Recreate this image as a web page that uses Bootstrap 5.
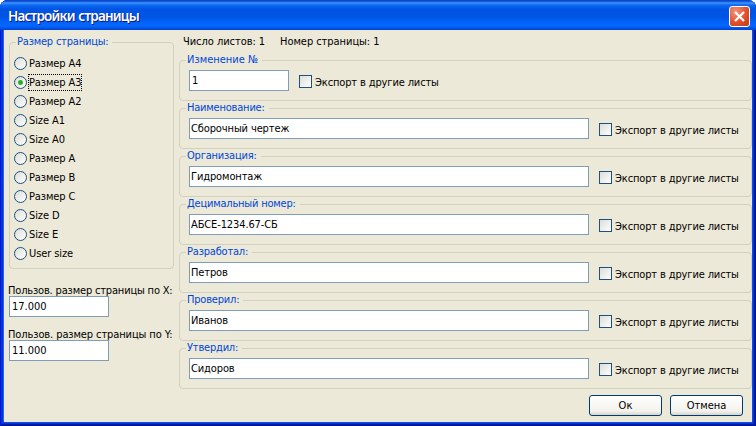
<!DOCTYPE html>
<html lang="ru">
<head>
<meta charset="utf-8">
<title>Настройки страницы</title>
<link href="https://cdn.jsdelivr.net/npm/bootstrap@5.3.0/dist/css/bootstrap.min.css" rel="stylesheet">
<style>
body{width:756px;height:426px;overflow:hidden;background:#fff;color:#000;font:11px/14px "DejaVu Sans Condensed","DejaVu Sans",sans-serif}
.window{width:756px;height:426px;background:#0831d9;border-radius:8px 8px 0 0;overflow:hidden;box-shadow:inset 1px 0 #0019cf,inset -1px -1px #00138c,inset 2px 0 #0831d9,inset -2px -2px #001dac}
.titlebar{height:30px;padding:2px 6px 0 8px;background:linear-gradient(#0845c9 0,#0a47cf 1px,#3d95ff 3px,#0c6bf2 5px,#0054e3 9px,#0055e5 17px,#0262f7 22px,#0567ff 26px,#0355e8 28px,#0043cf 30px)}
.titlebar h1{margin:0;font:600 13.5px/28px "Noto Sans","Open Sans",sans-serif;letter-spacing:-.8px;word-spacing:1px;color:#fff;text-shadow:1px 1px #0a1883}
.closer{width:21px;height:21px;margin-top:1px;padding:0;border:1px solid #fff;border-radius:3px;background:radial-gradient(circle at 30% 25%,#f0957c,#e1502c 55%,#c23a14)}
.client{height:392px;margin:0 4px;background:#ece9d8;box-shadow:-1px 0 #166aee,1px 0 #0855dd,0 1px #0855dd}
.side{width:165px;margin-left:5px;padding-top:5px}
.main{width:573px;margin-left:5px;padding-top:5px}
fieldset.frame{border:1px solid #d0d0bf;border-radius:4px;padding:3px 6px 0;height:48px}
fieldset.frame legend{float:none;width:auto;margin:0;padding:0 4px 0 1px;font-size:11px;line-height:14px;height:14px;letter-spacing:-.2px;color:#0046d5;white-space:nowrap}
fieldset.frame legend.plain{letter-spacing:0}
.line{margin-left:3px}
fieldset.sizes{height:234px;padding:5px 4px 0}
.sizes legend{margin-left:2px!important}
.choice{height:19px;gap:2px}
.choice input,.export input{appearance:none;flex:none;width:13px;height:13px;margin:0;border:1px solid #1c5180;background:linear-gradient(135deg,#dcdcd7,#fff)}
.choice input{border-radius:50%}
.choice input:checked{background:radial-gradient(circle,#21a121 0,#35b52f 2px,transparent 3px),linear-gradient(135deg,#dcdcd7,#fff)}
.choice span{line-height:14px;padding-top:1px;white-space:nowrap;letter-spacing:-.1px}
.choice input:checked+span{outline:1px dotted #000}
.field{height:21px;border:1px solid #7f9db9;border-radius:0;background:#fff;color:#000;padding:0 1px 1px;font:inherit;letter-spacing:-.12px}
.short{width:100px;padding-left:2px;letter-spacing:0}.long{width:400px}
.export{height:21px;margin-left:10px;gap:3px;padding-top:2px;white-space:nowrap;letter-spacing:-.13px}
.export span{padding-top:2px}
.heading{height:18px;padding-left:4px;white-space:nowrap;letter-spacing:-.05px}
.heading span+span{margin-left:15px}
.custom{padding-top:13px}
.caption{white-space:nowrap;height:14px;line-height:17px;margin-left:-1px;letter-spacing:-.17px}
.custom .field+.caption{margin-top:9px;letter-spacing:-.1px}
.actions{gap:8px;padding:6px 9px 0 0}
.push{width:73px;height:21px;padding:0;border:1px solid #003c74;border-radius:3px;background:linear-gradient(#fff,#f3f2ec 80%,#d9d4c8);font:inherit;color:#000;line-height:20px}
</style>
<script src="https://cdn.jsdelivr.net/npm/bootstrap@5.3.0/dist/js/bootstrap.bundle.min.js"></script>
</head>
<body>
<div class="window">
  <header class="titlebar d-flex justify-content-between align-items-center">
    <h1>Настройки страницы</h1>
    <button class="closer d-flex align-items-center justify-content-center" aria-label="Закрыть"><svg width="13" height="13" viewBox="0 0 13 13"><path d="M2 2 11 11M11 2 2 11" stroke="#fff" stroke-width="2.2"/></svg></button>
  </header>
  <form class="client d-flex">
    <div class="side">
      <fieldset class="frame sizes">
        <legend>Размер страницы:</legend>
        <label class="choice d-flex align-items-center"><input type="radio" name="s"><span>Размер A4</span></label>
        <label class="choice d-flex align-items-center"><input type="radio" name="s" checked><span>Размер A3</span></label>
        <label class="choice d-flex align-items-center"><input type="radio" name="s"><span>Размер A2</span></label>
        <label class="choice d-flex align-items-center"><input type="radio" name="s"><span>Size A1</span></label>
        <label class="choice d-flex align-items-center"><input type="radio" name="s"><span>Size A0</span></label>
        <label class="choice d-flex align-items-center"><input type="radio" name="s"><span>Размер A</span></label>
        <label class="choice d-flex align-items-center"><input type="radio" name="s"><span>Размер B</span></label>
        <label class="choice d-flex align-items-center"><input type="radio" name="s"><span>Размер C</span></label>
        <label class="choice d-flex align-items-center"><input type="radio" name="s"><span>Size D</span></label>
        <label class="choice d-flex align-items-center"><input type="radio" name="s"><span>Size E</span></label>
        <label class="choice d-flex align-items-center"><input type="radio" name="s"><span>User size</span></label>
      </fieldset>
      <div class="custom">
        <div class="caption">Пользов. размер страницы по X:</div>
        <input class="field short d-block" value="17.000">
        <div class="caption">Пользов. размер страницы по Y:</div>
        <input class="field short d-block" value="11.000">
      </div>
    </div>
    <div class="main">
      <div class="heading d-flex"><span>Число листов: 1</span><span>Номер страницы: 1</span></div>
      <fieldset class="frame"><legend class="plain">Изменение №</legend><div class="d-flex line"><input class="field short" value="1"><label class="export d-flex align-items-center"><input type="checkbox"><span>Экспорт в другие листы</span></label></div></fieldset>
      <fieldset class="frame"><legend>Наименование:</legend><div class="d-flex line"><input class="field long" value="Сборочный чертеж"><label class="export d-flex align-items-center"><input type="checkbox"><span>Экспорт в другие листы</span></label></div></fieldset>
      <fieldset class="frame"><legend>Организация:</legend><div class="d-flex line"><input class="field long" value="Гидромонтаж"><label class="export d-flex align-items-center"><input type="checkbox"><span>Экспорт в другие листы</span></label></div></fieldset>
      <fieldset class="frame"><legend>Децимальный номер:</legend><div class="d-flex line"><input class="field long" value="АБСЕ-1234.67-СБ"><label class="export d-flex align-items-center"><input type="checkbox"><span>Экспорт в другие листы</span></label></div></fieldset>
      <fieldset class="frame"><legend>Разработал:</legend><div class="d-flex line"><input class="field long" value="Петров"><label class="export d-flex align-items-center"><input type="checkbox"><span>Экспорт в другие листы</span></label></div></fieldset>
      <fieldset class="frame"><legend>Проверил:</legend><div class="d-flex line"><input class="field long" value="Иванов"><label class="export d-flex align-items-center"><input type="checkbox"><span>Экспорт в другие листы</span></label></div></fieldset>
      <fieldset class="frame"><legend>Утвердил:</legend><div class="d-flex line"><input class="field long" value="Сидоров"><label class="export d-flex align-items-center"><input type="checkbox"><span>Экспорт в другие листы</span></label></div></fieldset>
      <div class="actions d-flex justify-content-end"><button type="button" class="push">Ок</button><button type="button" class="push">Отмена</button></div>
    </div>
  </form>
</div>
</body>
</html>
